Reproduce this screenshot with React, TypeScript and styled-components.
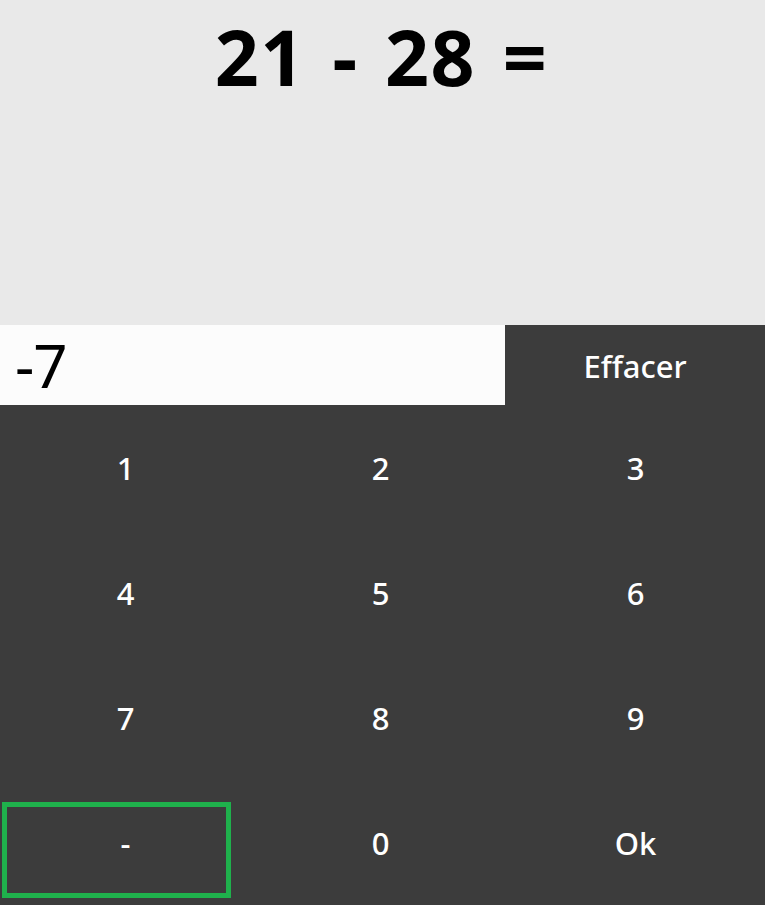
import React, { useState } from 'react';
import styled, { createGlobalStyle } from 'styled-components';

const GlobalStyle = createGlobalStyle`
  html, body {
    margin: 0;
    padding: 0;
    background: #3c3c3c;
    font-family: 'Noto Sans', 'Open Sans', sans-serif;
    overflow: hidden;
  }
`;

const KEYS = ['1', '2', '3', '4', '5', '6', '7', '8', '9', '-', '0', 'Ok'];

const App = () => {
  const [answer, setAnswer] = useState('-7');
  const pressKey = (key: string) => {
    if (key === 'Ok') return;
    setAnswer(answer + key);
  };
  return (
    <>
      <GlobalStyle />
      <Screen>
        <QuestionArea>
          <Question>21 - 28 =</Question>
        </QuestionArea>
        <InputRow>
          <AnswerBox>{answer}</AnswerBox>
          <ClearButton onClick={() => setAnswer('')}>Effacer</ClearButton>
        </InputRow>
        <Keypad>
          {KEYS.map((key) => (
            <KeyButton key={key} onClick={() => pressKey(key)}>
              {key}
              {key === '-' && <FocusRing />}
            </KeyButton>
          ))}
        </Keypad>
      </Screen>
    </>
  );
};

export default App;

const Screen = styled.div`
  width: 765px;
  height: 905px;
  display: flex;
  flex-direction: column;
`;

const QuestionArea = styled.div`
  height: 325px;
  background: #e9e9e9;
  display: flex;
  justify-content: center;
  align-items: flex-start;
`;

const Question = styled.h1`
  margin: 0;
  margin-top: 4px;
  margin-left: -2px;
  font-size: 77px;
  font-weight: 700;
  color: #000;
  line-height: 106px;
  letter-spacing: 1.5px;
  word-spacing: 5px;
`;

const InputRow = styled.div`
  height: 80px;
  display: flex;
`;

const AnswerBox = styled.div`
  width: 505px;
  background: #fcfcfc;
  color: #000;
  font-size: 60px;
  font-weight: 400;
  line-height: 80px;
  padding-left: 15px;
  letter-spacing: -1px;
  box-sizing: border-box;
`;

const ClearButton = styled.button`
  flex: 1;
  border: none;
  background: #3c3c3c;
  color: #fff;
  font-family: 'Noto Sans', 'Open Sans', sans-serif;
  font-size: 31px;
  font-weight: 500;
  padding: 0;
  padding-top: 2px;
  cursor: pointer;
`;

const Keypad = styled.div`
  flex: 1;
  display: grid;
  grid-template-columns: repeat(3, 255px);
  grid-template-rows: repeat(4, 125px);
  background: #3c3c3c;
`;

const KeyButton = styled.button`
  position: relative;
  border: none;
  background: transparent;
  color: #fff;
  font-family: 'Noto Sans', 'Open Sans', sans-serif;
  font-size: 31px;
  font-weight: 500;
  padding: 0 4px 0 0;
  cursor: pointer;
`;

const FocusRing = styled.span`
  position: absolute;
  left: 2px;
  top: 22px;
  width: 229px;
  height: 96px;
  border: 5px solid #1fb14c;
  box-sizing: border-box;
  pointer-events: none;
`;
